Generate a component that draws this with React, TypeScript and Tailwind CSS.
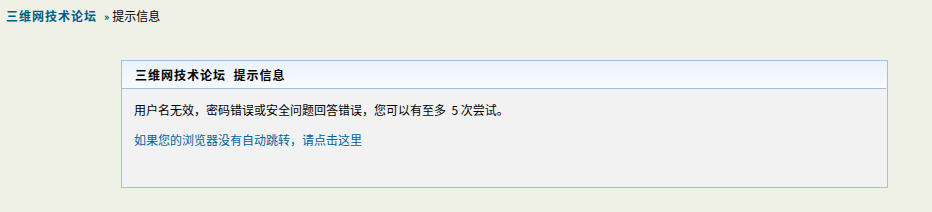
export default function App() {
  return (
    <div
      className="w-[932px] h-[212px] bg-[#eff1e7] text-[12px] leading-[16px] text-black overflow-hidden"
      style={{ fontFamily: '"Noto Sans CJK SC", "Noto Sans", sans-serif' }}
    >
      <div className="pl-[6px] pt-[8px] flex items-center h-[16px] box-content">
        <a className="font-bold text-[#005f88] tracking-[1px]">三维网技术论坛</a>
        <span className="ml-[7px] text-[11px]">»</span>
        <span className="ml-[3px]">提示信息</span>
      </div>
      <div className="ml-[121px] mt-[36px] w-[767px] h-[128px] border border-[#a6bfdc] bg-[#f2f2f2] flex flex-col">
        <div className="h-[28px] mr-[1px] border-b border-[#a6bfdc] bg-gradient-to-b from-[#eaf2fb] to-[#f8fbff] flex items-center pl-[13px] font-bold tracking-[1px]">
          三维网技术论坛&nbsp;&nbsp;提示信息
        </div>
        <div className="pl-[12px] pt-[13px] flex flex-col gap-[14px]">
          <p>用户名无效，密码错误或安全问题回答错误，您可以有至多&nbsp;&nbsp;5&nbsp;次尝试。</p>
          <p className="text-[#00629c]">如果您的浏览器没有自动跳转，请点击这里</p>
        </div>
      </div>
    </div>
  );
}
